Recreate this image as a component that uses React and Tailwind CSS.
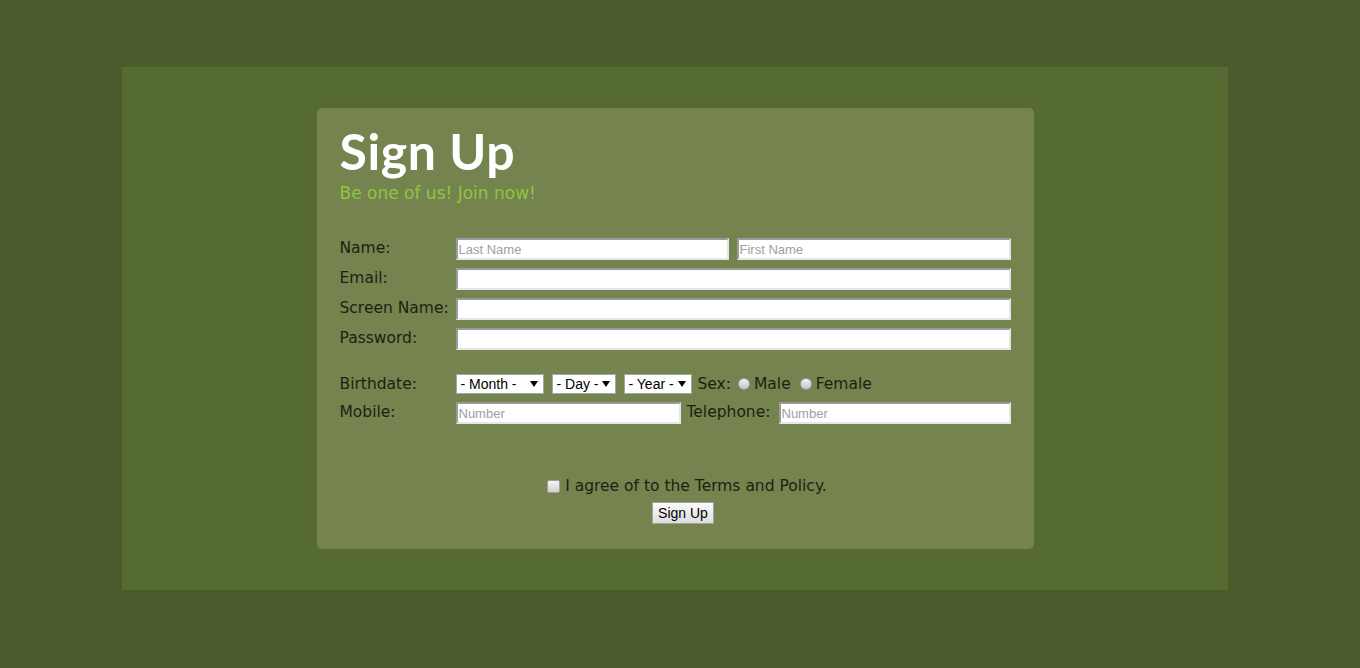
import React from 'react'

const labelFont = { fontFamily: '"DejaVu Sans", "Liberation Sans", sans-serif' }
const ctrlFont = { fontFamily: '"Liberation Sans", Arial, sans-serif' }

const inputCls =
  'h-[22px] bg-white border-2 border-t-[#9a9a9a] border-l-[#9a9a9a] border-b-[#e6e6e6] border-r-[#e6e6e6] px-[1px] text-[13px] text-black placeholder:text-[#a0a0a0] outline-none'

const TextInput = ({ placeholder = '', className = '' }) => (
  <input type="text" placeholder={placeholder} className={`${inputCls} ${className}`} style={ctrlFont} />
)

const Select = ({ label, className = '' }) => (
  <div
    className={`h-[20px] bg-white border border-[#a6a6a6] flex items-center justify-between pl-[4px] pr-[5px] text-[14px] text-black ${className}`}
    style={ctrlFont}
  >
    <span className="leading-none">{label}</span>
    <svg width="8" height="8" viewBox="0 0 8 8">
      <path d="M0 1 L8 1 L4 7 Z" fill="#000" />
    </svg>
  </div>
)

const Radio = () => (
  <span className="inline-block w-[12px] h-[12px] rounded-full border border-[#9c9c9c] bg-gradient-to-b from-[#f4f4f4] to-[#c4c4c4]" />
)

const Label = ({ children, className = '' }) => (
  <span className={`text-[15.5px] leading-[20px] text-[#1e1f12] ${className}`} style={labelFont}>
    {children}
  </span>
)

export default function App() {
  return (
    <div className="w-full h-[668px] bg-[#4b5b2c] pt-[67px] pl-[122px] overflow-hidden">
      <div className="w-[1106px] h-[523px] bg-[#566b32] pt-[41px]">
        <div className="mx-auto w-[717px] h-[441px] bg-[#75834e] rounded-[5px] px-[23px] pt-[15px]">
          <h1
            className="text-[50px] leading-[56px] font-bold text-white tracking-[0.6px]"
            style={{ fontFamily: 'Lato, "DejaVu Sans", sans-serif' }}
          >
            Sign Up
          </h1>
          <p className="mt-[3px] text-[17px] leading-[22px] text-[#8dc63f]" style={labelFont}>
            Be one of us! Join now!
          </p>

          <div className="mt-[34px] flex flex-col gap-[8px]">
            <div className="flex items-start">
              <Label className="w-[116px]">Name:</Label>
              <div className="flex gap-[8px] w-[555px]">
                <TextInput placeholder="Last Name" className="w-[273px]" />
                <TextInput placeholder="First Name" className="w-[274px]" />
              </div>
            </div>
            <div className="flex items-start">
              <Label className="w-[116px]">Email:</Label>
              <TextInput className="w-[555px]" />
            </div>
            <div className="flex items-start">
              <Label className="w-[116px]">Screen Name:</Label>
              <TextInput className="w-[555px]" />
            </div>
            <div className="flex items-start">
              <Label className="w-[116px]">Password:</Label>
              <TextInput className="w-[555px]" />
            </div>
          </div>

          <div className="mt-[24px] flex flex-col gap-[8px]">
            <div className="flex items-center h-[20px]">
              <Label className="w-[116px]">Birthdate:</Label>
              <div className="flex items-center gap-[8px]">
                <Select label="- Month -" className="w-[88px]" />
                <Select label="- Day -" className="w-[64px]" />
                <Select label="- Year -" className="w-[68px]" />
              </div>
              <Label className="ml-[6px]">Sex:</Label>
              <span className="ml-[7px] flex items-center gap-[4px]">
                <Radio />
                <Label>Male</Label>
              </span>
              <span className="ml-[9px] flex items-center gap-[4px]">
                <Radio />
                <Label>Female</Label>
              </span>
            </div>
            <div className="flex items-start">
              <Label className="w-[116px]">Mobile:</Label>
              <TextInput placeholder="Number" className="w-[225px]" />
              <Label className="ml-[6px] w-[92px]">Telephone:</Label>
              <TextInput placeholder="Number" className="w-[232px]" />
            </div>
          </div>

          <div className="mt-[52px] flex flex-col items-center pl-[16px]">
            <div className="flex items-center gap-[5px] ml-[8px]">
              <span className="inline-block w-[13px] h-[13px] rounded-[2px] border border-[#a0a0a0] bg-gradient-to-b from-[#f4f4f4] to-[#d0d0d0]" />
              <Label>I agree of to the Terms and Policy.</Label>
            </div>
            <button
              type="button"
              className="mt-[6px] h-[22px] w-[62px] border border-[#a3a3a3] bg-gradient-to-b from-[#fafafa] to-[#dedede] text-[14px] leading-none text-black"
              style={ctrlFont}
            >
              Sign Up
            </button>
          </div>
        </div>
      </div>
    </div>
  )
}
